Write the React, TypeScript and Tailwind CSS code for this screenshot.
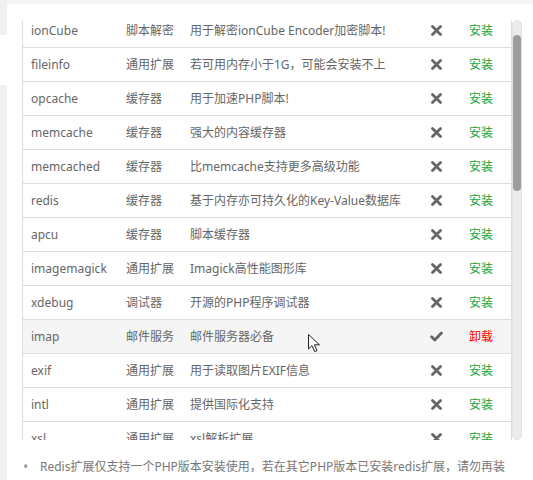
import * as React from "react"

type Ext = { name: string; type: string; desc: string; installed?: boolean; hover?: boolean }

const rows: Ext[] = [
  { name: "ionCube", type: "脚本解密", desc: "用于解密ionCube Encoder加密脚本!" },
  { name: "fileinfo", type: "通用扩展", desc: "若可用内存小于1G，可能会安装不上" },
  { name: "opcache", type: "缓存器", desc: "用于加速PHP脚本!" },
  { name: "memcache", type: "缓存器", desc: "强大的内容缓存器" },
  { name: "memcached", type: "缓存器", desc: "比memcache支持更多高级功能" },
  { name: "redis", type: "缓存器", desc: "基于内存亦可持久化的Key-Value数据库" },
  { name: "apcu", type: "缓存器", desc: "脚本缓存器" },
  { name: "imagemagick", type: "通用扩展", desc: "Imagick高性能图形库" },
  { name: "xdebug", type: "调试器", desc: "开源的PHP程序调试器" },
  { name: "imap", type: "邮件服务", desc: "邮件服务器必备", installed: true, hover: true },
  { name: "exif", type: "通用扩展", desc: "用于读取图片EXIF信息" },
  { name: "intl", type: "通用扩展", desc: "提供国际化支持" },
  { name: "xsl", type: "通用扩展", desc: "xsl解析扩展" },
]

function TimesIcon() {
  return (
    <svg width="11" height="11" viewBox="0 0 11 11">
      <path d="M1.5 1.5 L9.5 9.5 M9.5 1.5 L1.5 9.5" stroke="#666" strokeWidth="2.8" strokeLinecap="round" />
    </svg>
  )
}

function CheckIcon() {
  return (
    <svg width="13" height="11" viewBox="0 0 13 11">
      <path d="M1.6 5.8 L4.8 9 L11.4 2" stroke="#666" strokeWidth="2.8" strokeLinecap="round" strokeLinejoin="round" fill="none" />
    </svg>
  )
}

function Cursor() {
  return (
    <svg width="13" height="19" viewBox="0 0 13 19" className="absolute left-[308px] top-[334px]">
      <path d="M0.5 0.5 L0.5 15 L4 11.6 L6.6 17.6 L9 16.6 L6.4 10.8 L11.5 10.8 Z" fill="#fff" stroke="#222" strokeWidth="1" strokeLinejoin="round" />
    </svg>
  )
}

export default function App() {
  return (
    <div
      className="relative w-[533px] h-[480px] bg-white flex overflow-hidden text-[12px] text-[#666]"
      style={{ fontFamily: '"Noto Sans", "Noto Sans CJK SC", sans-serif' }}
    >
      {/* left tab strip */}
      <div className="w-[7px] flex flex-col shrink-0">
        <div className="h-[35px] bg-[#f0f0f0]" />
        <div className="h-[50px] bg-white" />
        <div className="flex-1 bg-[#f0f0f0]" />
      </div>

      <div className="flex-1 flex flex-col">
        <div className="h-[4px] bg-[#f5f5f5]" />

        <div className="mt-[16px] ml-[15px] flex h-[420px]">
          <div className="w-[490px] border-l border-r border-[#ddd] overflow-hidden">
            <div className="-mt-[6px]">
              {rows.map((r) => (
                <div
                  key={r.name}
                  className={`h-[34px] border-b border-[#ddd] grid grid-cols-[95px_64px_234px_40px_1fr] items-center ${r.hover ? "bg-[#f5f5f5]" : ""}`}
                >
                  <span className="pl-[8px]">{r.name}</span>
                  <span className="pl-[8px]">{r.type}</span>
                  <span className="pl-[8px] whitespace-nowrap">{r.desc}</span>
                  <span className="flex justify-center">{r.installed ? <CheckIcon /> : <TimesIcon />}</span>
                  <span className={`pl-[13px] ${r.installed ? "text-[#ff0000]" : "text-[#20a53a]"}`}>
                    {r.installed ? "卸载" : "安装"}
                  </span>
                </div>
              ))}
            </div>
          </div>

          {/* scrollbar */}
          <div className="w-[10px] bg-[#ececec] rounded-[5px] border border-[#e2e2e2] flex flex-col">
            <div className="mt-[14px] h-[156px] bg-[#9c9c9c] rounded-[5px]" />
          </div>
        </div>

        <div className="flex items-center h-[40px] pt-[14px] pl-[16px] text-[#777] whitespace-nowrap">
          <span className="w-[17px] text-[#999] text-[14px] leading-none">•</span>
          <span>Redis扩展仅支持一个PHP版本安装使用，若在其它PHP版本已安装redis扩展，请勿再装</span>
        </div>
      </div>

      <Cursor />
    </div>
  )
}
